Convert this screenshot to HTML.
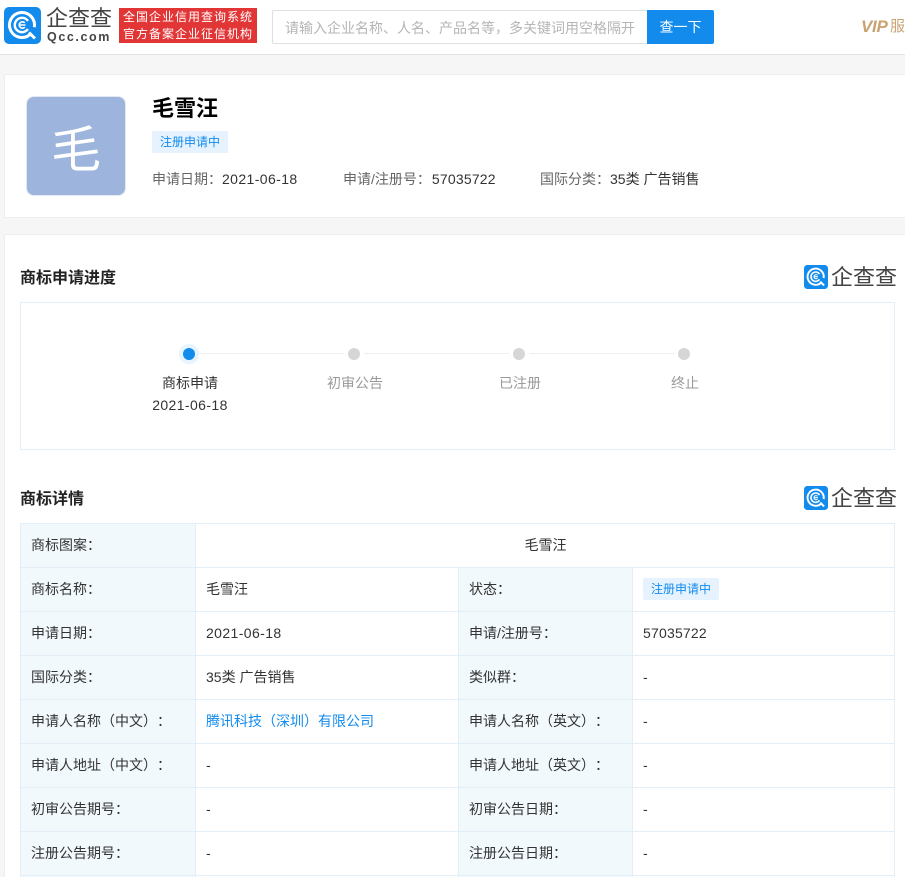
<!DOCTYPE html>
<html lang="zh-CN"><head><meta charset="utf-8"><title>毛雪汪</title>
<style>
html,body{margin:0;padding:0}
body{width:905px;height:877px;overflow:hidden;background:#f6f6f6;position:relative;font-family:"Liberation Sans","Noto Sans CJK SC",sans-serif;font-size:14px;color:#333;text-spacing-trim:space-all}
.a{position:absolute;white-space:nowrap}
.b{position:absolute;box-sizing:border-box}
.tag{position:absolute;background:#e6f3ff;color:#128bed;font-size:12px;height:22px;line-height:23px;width:76px;text-align:center;border-radius:2px}
.c{position:absolute;height:44px;line-height:45px;box-sizing:border-box;white-space:nowrap}
.l{background:#f2f9fc;color:#333;font-size:14px;padding-left:11px}
.v{font-size:14px;padding-left:11px;color:#333}
.d{letter-spacing:.4px}
.n{letter-spacing:.2px}
.hl{position:absolute;background:#e4eef6}
.dot{position:absolute;width:12px;height:12px;border-radius:50%;background:#d6d6d6}
.sl{position:absolute;width:70px;text-align:center;font-size:14px;color:#999;top:373px;line-height:20px}
.ttl{position:absolute;left:20px;font-size:16px;font-weight:bold;color:#222;line-height:22px}
</style></head><body>
<div class="b" style="left:0;top:0;width:905px;height:55px;background:#fff;border-bottom:1px solid #e2e2e2"></div>

<svg class="b" style="left:4px;top:7px" width="37" height="37" viewBox="0 0 37 37"><rect width="37" height="37" rx="5" fill="#128bed"/><path d="M26.840 26.840A12.500 12.500 0 1 1 30.300 20.200" fill="none" stroke="#fff" stroke-width="3"/><path d="M23.900 22.100A7.200 7.200 0 1 1 23.900 13.900" fill="none" stroke="#fff" stroke-width="2.400"/><path d="M20.800 15.800A3.200 3.200 0 1 0 20.800 20.200M15 18H21.500" fill="none" stroke="#fff" stroke-width="1.600"/><path d="M25 25.500l6 6" stroke="#fff" stroke-width="3"/></svg>
<div class="a" style="left:46px;top:4px;font-size:22px;line-height:30px;color:#444;width:70px">企查查</div>
<div class="a" style="left:47px;top:30px;font-size:12.500px;font-weight:bold;line-height:15px;color:#444;letter-spacing:1.600px">Qcc.com</div>
<div class="b" style="left:119px;top:8px;width:138px;height:35px;background:#e23535;color:#fff;font-size:12px;line-height:17px;padding:1px 0 0 4px;letter-spacing:1px;white-space:nowrap">全国企业信用查询系统<br>官方备案企业征信机构</div>

<div class="b" style="left:272px;top:10px;width:376px;height:34px;border:1px solid #e0e0e0;border-right:0;border-radius:2px 0 0 2px;background:#fff"></div>
<div class="a" style="left:285px;top:18px;font-size:14px;line-height:20px;color:#b5b5b5;width:350px;overflow:hidden">请输入企业名称、人名、产品名等，多关键词用空格隔开</div>
<div class="b" style="left:647px;top:10px;width:67px;height:34px;background:#128bed;color:#fff;text-align:center;line-height:34px;font-size:14px;border-radius:0 2px 2px 0">查一下</div>
<div class="a" style="left:861px;top:17px;font-size:17px;line-height:20px;font-weight:bold;font-style:italic;color:#c9a472;letter-spacing:-.3px">VIP</div>
<div class="a" style="left:890px;top:17px;font-size:15px;line-height:20px;color:#c9a472">服</div>

<div class="b" style="left:4px;top:74px;width:901px;height:144px;background:#fff;border:1px solid #eee;border-right:0"></div>
<div class="b" style="left:26px;top:96px;width:100px;height:100px;background:#9db4dc;border-radius:8px;border:1px solid #e3e7ef"></div>
<div class="a" style="left:26px;top:96px;width:100px;line-height:108px;text-align:center;font-size:50px;color:#fff">毛</div>
<div class="a" style="left:152px;top:94px;font-size:22px;font-weight:bold;line-height:30px;color:#000">毛雪汪</div>
<div class="tag" style="left:152px;top:131px;border-radius:0">注册申请中</div>
<div class="a" style="left:152px;top:169px;line-height:20px"><span style="color:#666">申请日期：</span><span class="d">2021-06-18</span></div>
<div class="a" style="left:343px;top:169px;line-height:20px"><span style="color:#666">申请/注册号：</span><span class="n" style="margin-left:1px">57035722</span></div>
<div class="a" style="left:540px;top:169px;line-height:20px"><span style="color:#666">国际分类：</span>35类 广告销售</div>

<div class="b" style="left:4px;top:234px;width:901px;height:643px;background:#fff;border:1px solid #eee;border-right:0;border-bottom:0"></div>

<div class="ttl" style="top:268px">商标申请进度</div>
<svg class="b" style="left:804px;top:265px" width="24" height="24" viewBox="0 0 37 37"><rect width="37" height="37" rx="5" fill="#128bed"/><path d="M26.840 26.840A12.500 12.500 0 1 1 30.300 20.200" fill="none" stroke="#fff" stroke-width="3"/><path d="M23.900 22.100A7.200 7.200 0 1 1 23.900 13.900" fill="none" stroke="#fff" stroke-width="2.400"/><path d="M20.800 15.800A3.200 3.200 0 1 0 20.800 20.200M15 18H21.500" fill="none" stroke="#fff" stroke-width="1.600"/><path d="M25 25.500l6 6" stroke="#fff" stroke-width="3"/></svg>
<div class="a" style="left:831px;top:263px;font-size:22px;line-height:30px;color:#444">企查查</div>

<div class="b" style="left:20px;top:302px;width:875px;height:148px;border:1px solid #e4eef6"></div>
<div class="b" style="left:189px;top:353px;width:495px;height:1px;background:#eee"></div>
<div class="b" style="left:179px;top:344px;width:20px;height:20px;border-radius:50%;background:#e7f3fe"></div>
<div class="dot" style="left:183px;top:348px;background:#128bed"></div>
<div class="b" style="left:344px;top:344px;width:20px;height:20px;background:#fff"></div><div class="dot" style="left:348px;top:348px"></div>
<div class="b" style="left:509px;top:344px;width:20px;height:20px;background:#fff"></div><div class="dot" style="left:513px;top:348px"></div>
<div class="b" style="left:674px;top:344px;width:20px;height:20px;background:#fff"></div><div class="dot" style="left:678px;top:348px"></div>
<div class="sl" style="left:155px;color:#333">商标申请</div>
<div class="a d" style="left:140px;top:396px;width:100px;text-align:center;font-size:14px;line-height:18px;color:#333">2021-06-18</div>
<div class="sl" style="left:320px">初审公告</div>
<div class="sl" style="left:485px">已注册</div>
<div class="sl" style="left:650px">终止</div>

<div class="ttl" style="top:489px">商标详情</div>
<svg class="b" style="left:804px;top:486px" width="24" height="24" viewBox="0 0 37 37"><rect width="37" height="37" rx="5" fill="#128bed"/><path d="M26.840 26.840A12.500 12.500 0 1 1 30.300 20.200" fill="none" stroke="#fff" stroke-width="3"/><path d="M23.900 22.100A7.200 7.200 0 1 1 23.900 13.900" fill="none" stroke="#fff" stroke-width="2.400"/><path d="M20.800 15.800A3.200 3.200 0 1 0 20.800 20.200M15 18H21.500" fill="none" stroke="#fff" stroke-width="1.600"/><path d="M25 25.500l6 6" stroke="#fff" stroke-width="3"/></svg>
<div class="a" style="left:831px;top:484px;font-size:22px;line-height:30px;color:#444">企查查</div>

<!-- table backgrounds and cells -->
<div class="c l" style="left:20px;top:523px;width:175px">商标图案：</div>
<div class="c v" style="left:196px;top:523px;width:699px;text-align:center;padding:0">毛雪汪</div>

<div class="c l" style="left:20px;top:567px;width:175px">商标名称：</div>
<div class="c v" style="left:195px;top:567px">毛雪汪</div>
<div class="c l" style="left:458px;top:567px;width:174px">状态：</div>
<div class="tag" style="left:643px;top:578px;width:76px">注册申请中</div>

<div class="c l" style="left:20px;top:611px;width:175px">申请日期：</div>
<div class="c v d" style="left:195px;top:611px">2021-06-18</div>
<div class="c l" style="left:458px;top:611px;width:174px">申请/注册号：</div>
<div class="c v n" style="left:632px;top:611px">57035722</div>

<div class="c l" style="left:20px;top:655px;width:175px">国际分类：</div>
<div class="c v" style="left:195px;top:655px">35类 广告销售</div>
<div class="c l" style="left:458px;top:655px;width:174px">类似群：</div>
<div class="c v" style="left:632px;top:655px">-</div>

<div class="c l" style="left:20px;top:699px;width:175px">申请人名称（中文）：</div>
<div class="c v" style="left:195px;top:699px;color:#128bed">腾讯科技（深圳）有限公司</div>
<div class="c l" style="left:458px;top:699px;width:174px">申请人名称（英文）：</div>
<div class="c v" style="left:632px;top:699px">-</div>

<div class="c l" style="left:20px;top:743px;width:175px">申请人地址（中文）：</div>
<div class="c v" style="left:195px;top:743px">-</div>
<div class="c l" style="left:458px;top:743px;width:174px">申请人地址（英文）：</div>
<div class="c v" style="left:632px;top:743px">-</div>

<div class="c l" style="left:20px;top:787px;width:175px">初审公告期号：</div>
<div class="c v" style="left:195px;top:787px">-</div>
<div class="c l" style="left:458px;top:787px;width:174px">初审公告日期：</div>
<div class="c v" style="left:632px;top:787px">-</div>

<div class="c l" style="left:20px;top:831px;width:175px">注册公告期号：</div>
<div class="c v" style="left:195px;top:831px">-</div>
<div class="c l" style="left:458px;top:831px;width:174px">注册公告日期：</div>
<div class="c v" style="left:632px;top:831px">-</div>

<div class="c l" style="left:20px;top:875px;width:175px;height:2px"></div>
<div class="c l" style="left:458px;top:875px;width:174px;height:2px"></div>

<!-- grid lines -->
<div class="hl" style="left:20px;top:523px;width:875px;height:1px"></div>
<div class="hl" style="left:20px;top:567px;width:875px;height:1px"></div>
<div class="hl" style="left:20px;top:611px;width:875px;height:1px"></div>
<div class="hl" style="left:20px;top:655px;width:875px;height:1px"></div>
<div class="hl" style="left:20px;top:699px;width:875px;height:1px"></div>
<div class="hl" style="left:20px;top:743px;width:875px;height:1px"></div>
<div class="hl" style="left:20px;top:787px;width:875px;height:1px"></div>
<div class="hl" style="left:20px;top:831px;width:875px;height:1px"></div>
<div class="hl" style="left:20px;top:875px;width:875px;height:1px"></div>
<div class="hl" style="left:20px;top:523px;width:1px;height:354px"></div>
<div class="hl" style="left:195px;top:523px;width:1px;height:354px"></div>
<div class="hl" style="left:458px;top:567px;width:1px;height:310px"></div>
<div class="hl" style="left:632px;top:567px;width:1px;height:310px"></div>
<div class="hl" style="left:894px;top:523px;width:1px;height:354px"></div>
</body></html>
